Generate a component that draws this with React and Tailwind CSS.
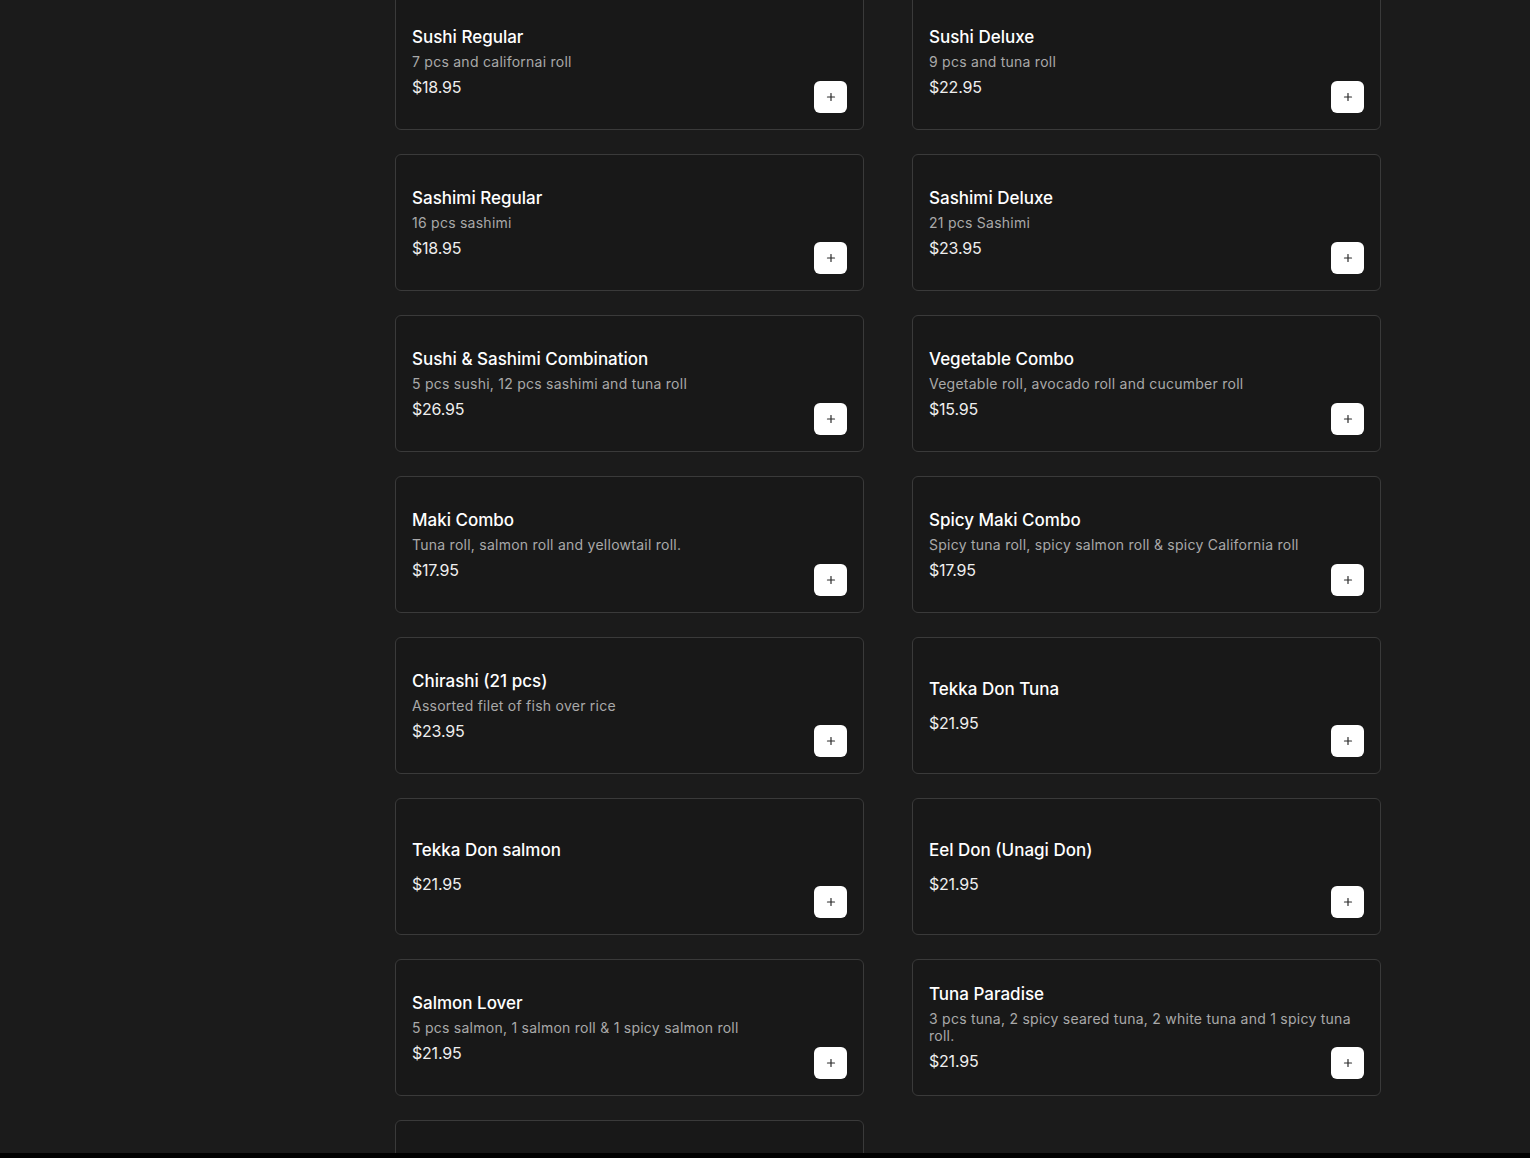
import { Plus } from 'lucide-react'

const ITEMS = [
  { name: 'Sushi Regular', desc: '7 pcs and californai roll', price: '$18.95' },
  { name: 'Sushi Deluxe', desc: '9 pcs and tuna roll', price: '$22.95' },
  { name: 'Sashimi Regular', desc: '16 pcs sashimi', price: '$18.95' },
  { name: 'Sashimi Deluxe', desc: '21 pcs Sashimi', price: '$23.95' },
  { name: 'Sushi & Sashimi Combination', desc: '5 pcs sushi, 12 pcs sashimi and tuna roll', price: '$26.95' },
  { name: 'Vegetable Combo', desc: 'Vegetable roll, avocado roll and cucumber roll', price: '$15.95' },
  { name: 'Maki Combo', desc: 'Tuna roll, salmon roll and yellowtail roll.', price: '$17.95' },
  { name: 'Spicy Maki Combo', desc: 'Spicy tuna roll, spicy salmon roll & spicy California roll', price: '$17.95' },
  { name: 'Chirashi (21 pcs)', desc: 'Assorted filet of fish over rice', price: '$23.95' },
  { name: 'Tekka Don Tuna', desc: '', price: '$21.95' },
  { name: 'Tekka Don salmon', desc: '', price: '$21.95' },
  { name: 'Eel Don (Unagi Don)', desc: '', price: '$21.95' },
  { name: 'Salmon Lover', desc: '5 pcs salmon, 1 salmon roll & 1 spicy salmon roll', price: '$21.95' },
  { name: 'Tuna Paradise', desc: '3 pcs tuna, 2 spicy seared tuna, 2 white tuna and 1 spicy tuna roll.', price: '$21.95' },
  { name: '', desc: '', price: '' },
]

function MenuCard({ item }) {
  return (
    <div className="relative h-[137px] rounded-md border border-[#3a3a3a] bg-[#181818] px-4 pr-7 flex flex-col justify-center">
      {item.name && <div className="text-[17px] font-medium text-white leading-[22px]">{item.name}</div>}
      {item.desc && <div className="text-[14px] tracking-[0.25px] text-[#a9a9a9] leading-[17px] mt-[5px]">{item.desc}</div>}
      {item.price && <div className={`text-[16px] tracking-[-0.2px] text-[#eeeeee] leading-[22px] ${item.desc ? 'mt-[6px]' : 'mt-3'}`}>{item.price}</div>}
      {item.name && (
        <button className="absolute right-4 bottom-4 w-[33px] h-8 rounded-md bg-white flex items-center justify-center text-[#2a2a2a]">
          <Plus size={12} strokeWidth={2.4} />
        </button>
      )}
    </div>
  )
}

export default function App() {
  return (
    <div className="min-h-screen bg-[#1b1b1b] overflow-hidden" style={{ fontFamily: 'Inter, "Noto Sans", sans-serif' }}>
      <div className="h-[1158px] overflow-hidden">
        <div className="ml-[395px] w-[986px] -mt-[7px] grid grid-cols-2 gap-x-12 gap-y-6">
          {ITEMS.map((item, i) => (
            <MenuCard key={i} item={item} />
          ))}
        </div>
      </div>
      <div className="fixed bottom-0 left-0 right-0 h-[5px] bg-black" />
    </div>
  )
}
